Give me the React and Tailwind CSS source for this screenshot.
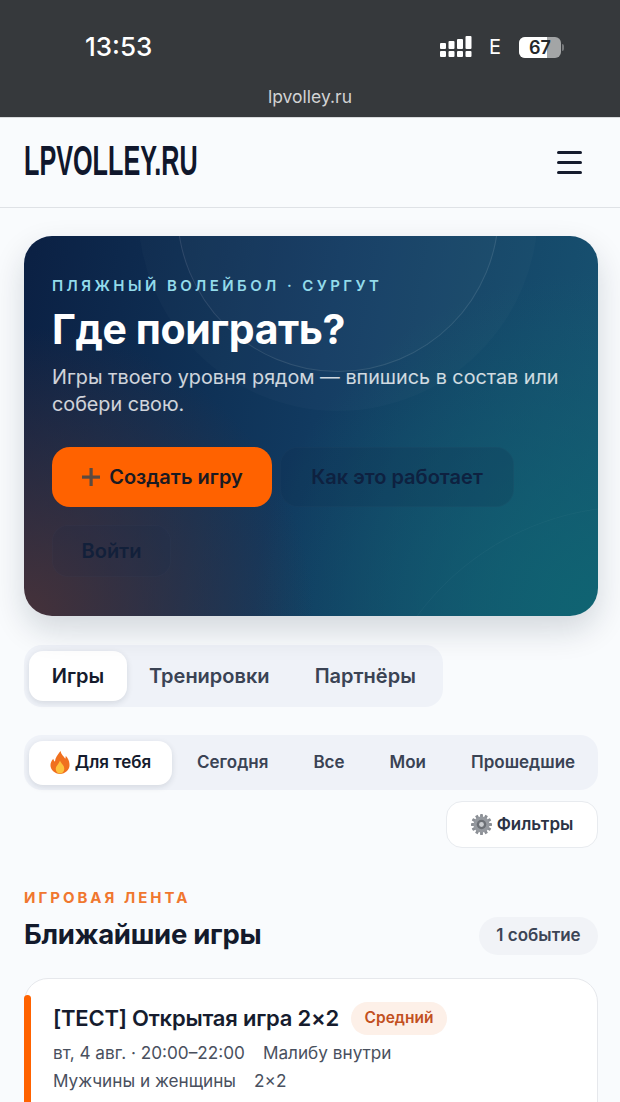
function SignalIcon() {
  return (
    <svg width="32" height="22" viewBox="0 0 32 22" fill="#fff">
      <rect x="0" y="7" width="6" height="6" rx="1" />
      <rect x="0" y="15" width="6" height="6" rx="1" />
      <rect x="8.500" y="5" width="6" height="8" rx="1" />
      <rect x="8.500" y="15" width="6" height="6" rx="1" />
      <rect x="17" y="3" width="6" height="10" rx="1" />
      <rect x="17" y="15" width="6" height="6" rx="1" />
      <rect x="25.500" y="0" width="6" height="13" rx="1" />
      <rect x="25.500" y="15" width="6" height="6" rx="1" />
    </svg>
  )
}

function Battery() {
  return (
    <div className="flex items-center gap-[1px]">
      <div className="relative w-[42px] h-[21px] rounded-[6px] overflow-hidden bg-[#a3a5a6]">
        <div className="h-full w-[28px] bg-white" />
        <span className="absolute inset-0 flex items-center justify-center text-[18px] font-semibold text-[#25282b]">67</span>
      </div>
      <div className="w-[2px] h-[7px] rounded-r bg-[#77797b]" />
    </div>
  )
}

function FireIcon() {
  return (
    <svg width="20" height="23" viewBox="0 0 21 24">
      <path d="M11 0c1 4 3 5 5 8 .5-1 .6-2 .5-3 3 3 4 6.500 4 10 0 5-4.500 9-10 9S.5 20 .5 15c0-3 1.500-5.500 3-7 .2 1.500.8 2.500 1.700 3C5.500 7 8 4 11 0z" fill="#f0701f" />
      <path d="M10.500 10c.5 2.500 4.500 4.500 4.500 8.500 0 3-2 5-4.500 5S6 21.500 6 18.500c0-3 3.500-5 4.500-8.500z" fill="#fdc13c" />
    </svg>
  )
}

function GearIcon() {
  const teeth = [0, 30, 60, 90, 120, 150]
  return (
    <svg width="21" height="21" viewBox="0 0 22 22">
      {teeth.map((a) => (
        <rect key={a} x="9.500" y="0" width="3" height="22" rx="0.500" fill="#8b8f95" transform={`rotate(${a} 11 11)`} />
      ))}
      <circle cx="11" cy="11" r="8.500" fill="#95999f" />
      <circle cx="11" cy="11" r="5" fill="#6b6f75" />
      <circle cx="11" cy="11" r="2.500" fill="#c9ccd0" />
    </svg>
  )
}

function Hero() {
  return (
    <section className="relative overflow-hidden ml-6 mr-[22px] mt-7 h-[380px] rounded-[28px] px-7 pt-[41px] shadow-[0_14px_32px_rgba(15,30,50,0.16)] bg-[radial-gradient(circle_at_0%_100%,#46323a_0%,rgba(70,50,58,0)_42%),radial-gradient(circle_at_100%_100%,#0f6472_0%,rgba(15,100,114,0)_50%),linear-gradient(100deg,#0b2043_0%,#113a60_50%,#185472_100%)]">
      <div className="absolute left-[153px] top-[-186px] w-[322px] h-[322px] rounded-full border border-white/10 bg-white/[0.02]" />
      <div className="absolute left-[114px] top-[-225px] w-[400px] h-[400px] rounded-full bg-white/[0.02]" />
      <div className="absolute left-[340px] top-[270px] w-[540px] h-[540px] rounded-full border border-white/[0.03]" />

      <div className="relative">
        <p className="text-[15px] leading-[18px] font-semibold tracking-[0.227em] text-[#93dbea] whitespace-nowrap">ПЛЯЖНЫЙ ВОЛЕЙБОЛ · СУРГУТ</p>
        <h1 className="mt-[9px] text-[41px] leading-[50px] font-bold text-white tracking-[-0.01em]">Где поиграть?</h1>
        <p className="mt-[10px] text-[19.750px] leading-[27px] text-white/80">Игры твоего уровня рядом — впишись в состав или собери свою.</p>
        <div className="mt-[29px] flex gap-2">
          <button className="w-[220px] h-[60px] rounded-[18px] bg-[#ff6200] flex items-center justify-center gap-2 text-[20px] font-semibold text-[#1a1a22]">
            <svg width="20" height="20" viewBox="0 0 20 20" fill="#5b4a40">
              <rect x="8.500" y="1" width="3.200" height="18" />
              <rect x="1" y="8.500" width="18" height="3.200" />
            </svg>
            Создать игру
          </button>
          <button className="w-[234px] h-[60px] rounded-[18px] bg-[#0f2c4c]/20 border border-white/[0.02] text-[20px] font-semibold text-[#0e2140]">Как это работает</button>
        </div>
        <button className="block mt-[18px] w-[119px] h-[52px] rounded-[16px] bg-[#0f2c4c]/10 border border-white/[0.02] text-[20px] font-semibold text-[#12203a]">Войти</button>
      </div>
    </section>
  )
}

export default function App() {
  const font = { fontFamily: 'Inter, "Noto Sans", sans-serif' }
  return (
    <div className="w-[620px] h-[1102px] overflow-hidden bg-[#f9fbfd]" style={font}>
      {/* phone chrome */}
      <div className="relative h-[117px] bg-[#36393c] text-white">
        <div className="flex items-center h-[94px] pl-[85px] pr-[56px]">
          <span className="text-[26px] font-medium leading-none">13:53</span>
          <div className="ml-auto flex items-center">
            <SignalIcon />
            <span className="ml-[17px] mr-[18px] text-[20px] leading-none">E</span>
            <Battery />
          </div>
        </div>
        <p className="text-center text-[17.500px] leading-[22px] text-[#d2d3d4] -mt-[8px]">lpvolley.ru</p>
      </div>

      <header className="relative h-[91px] border-t border-b border-t-[#d8dadc] border-b-[#dfe2e6] flex items-center justify-between pl-6 pr-[38px] overflow-hidden">
        <span className="block -mt-1 origin-left scale-x-[0.6] whitespace-nowrap text-[42px] font-bold text-[#10172c]" style={{ fontFamily: '"Liberation Sans", sans-serif' }}>LPVOLLEY.RU</span>
        <div className="flex flex-col gap-[7px]">
          <div className="w-[25px] h-[3px] rounded-full bg-[#161c2e]" />
          <div className="w-[25px] h-[3px] rounded-full bg-[#161c2e]" />
          <div className="w-[25px] h-[3px] rounded-full bg-[#161c2e]" />
        </div>
      </header>

      <Hero />

      <div className="ml-6 mt-[29px] w-[419px] h-[62px] rounded-[18px] bg-[#eff2f8] flex items-center px-[5px] text-[20px] font-semibold text-[#3a4354]">
        <div className="w-[98px] h-[50px] rounded-[14px] bg-white shadow-[0_2px_6px_rgba(20,30,50,0.12)] flex items-center justify-center text-[#151b2d]">Игры</div>
        <span className="ml-[22px]">Тренировки</span>
        <span className="ml-[45px]">Партнёры</span>
      </div>

      <div className="ml-6 mr-[22px] mt-7 h-[55px] rounded-[18px] bg-[#eff2f8] flex items-center px-[5px] text-[17px] font-semibold text-[#3a4354]">
        <div className="w-[143px] h-[44px] rounded-[14px] bg-white shadow-[0_2px_6px_rgba(20,30,50,0.12)] flex items-center justify-center gap-[5px] text-[#151b2d]">
          <FireIcon />
          Для тебя
        </div>
        <span className="ml-[25px]">Сегодня</span>
        <span className="ml-[45px]">Все</span>
        <span className="ml-[45px]">Мои</span>
        <span className="ml-[45px]">Прошедшие</span>
      </div>

      <div className="ml-6 mr-[22px] mt-[11px] flex justify-end">
        <button className="w-[152px] h-[47px] rounded-[16px] bg-white border border-[#e8ebef] flex items-center justify-center gap-[5px] text-[17px] font-semibold text-[#2b3345]">
          <GearIcon />
          Фильтры
        </button>
      </div>

      <p className="mx-6 mt-[41px] text-[15px] leading-[18px] font-bold tracking-[0.2em] text-[#f0772f]">ИГРОВАЯ ЛЕНТА</p>
      <div className="ml-6 mr-[22px] mt-[10px] flex items-center justify-between">
        <h2 className="-mt-1 text-[27.500px] leading-[38px] font-bold text-[#131a2c] tracking-[-0.01em]">Ближайшие игры</h2>
        <span className="h-[38px] w-[119px] rounded-full bg-[#f1f3f7] flex items-center justify-center text-[17px] font-semibold text-[#3c4556]">1 событие</span>
      </div>

      <article className="relative ml-6 mr-[22px] mt-[23px] h-[300px] rounded-[24px] border border-[#e6e8ec] bg-white pl-[28px] pt-[22px]">
        <div className="absolute left-[-1px] top-[16px] bottom-0 w-[7px] rounded-t bg-[#ff6200]" />
        <div className="flex items-center gap-3">
          <h3 className="text-[22px] leading-[34px] font-semibold text-[#161c2e] tracking-[-0.01em]">[ТЕСТ] Открытая игра 2×2</h3>
          <span className="h-[33px] w-[96px] rounded-full bg-[#fdf0e8] flex items-center justify-center text-[15.500px] font-semibold text-[#c2501f]">Средний</span>
        </div>
        <div className="mt-[4px] flex gap-[18px] text-[17.200px] leading-[28px] text-[#49505e]">
          <span>вт, 4 авг. · 20:00–22:00</span>
          <span>Малибу внутри</span>
        </div>
        <div className="flex gap-[18px] text-[17.200px] leading-[28px] text-[#49505e]">
          <span>Мужчины и женщины</span>
          <span>2×2</span>
        </div>
      </article>
    </div>
  )
}
